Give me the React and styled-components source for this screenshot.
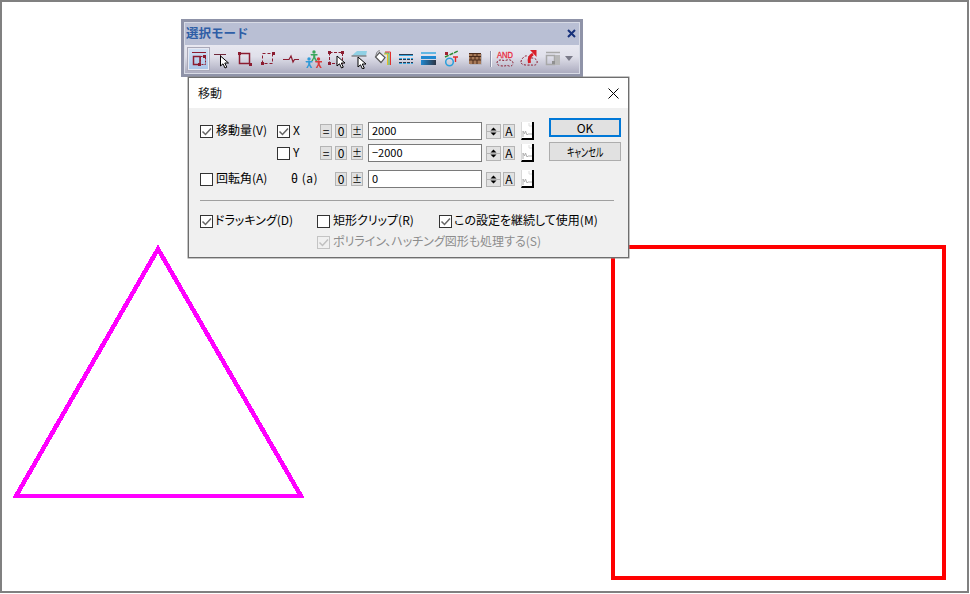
import React from 'react';
import styled, { createGlobalStyle } from 'styled-components';

const GlobalStyle = createGlobalStyle`
  html, body {
    margin: 0;
    padding: 0;
    background: #fff;
  }
  * {
    box-sizing: border-box;
  }
`;

const UI_FONT = '"Noto Sans CJK JP", "Liberation Sans", sans-serif';
const DARK_RED = '#8c1c30';

const Canvas = styled.div`
  position: relative;
  width: 969px;
  height: 593px;
  border: 2px solid #808080;
  background: #fff;
  overflow: hidden;
`;

const Drawing = styled.svg`
  position: absolute;
  left: -2px;
  top: -2px;
`;

const Toolbar = styled.div`
  position: absolute;
  left: 179px;
  top: 17px;
  width: 402px;
  height: 58px;
  border: 3px solid #8f93a8;
  outline: 1px solid #d8dbe6;
  outline-offset: -4px;
  background: #b9bfd4;
  display: flex;
  flex-direction: column;
`;

const ToolbarTitle = styled.div`
  height: 23px;
  flex: none;
  display: flex;
  align-items: center;
  justify-content: space-between;
  padding: 0 4px 0 2px;
  color: #2f5ea6;
  font: 700 12.5px/1 ${UI_FONT};
`;

const ToolbarRow = styled.div`
  flex: 1;
  display: flex;
  align-items: center;
  padding: 0 0 2px 3px;
  background: linear-gradient(#e8e8f0 0%, #e0e0ea 40%, #a9a9bd 100%);
`;

const ToolButton = styled.div`
  width: ${({ $wide }) => ($wide ? 24 : 23)}px;
  height: 24px;
  flex: none;
  display: flex;
  align-items: center;
  justify-content: center;
  ${({ $active }) => $active && `
    background: linear-gradient(#d4e2f4, #a8c4e8);
    border: 1px solid #a9a9b9;
    box-shadow: inset 0 0 0 1px #e6e8f2;
  `}
`;

const ToolSep = styled.div`
  width: 2px;
  height: 16px;
  flex: none;
  margin: 0 1px 0 4px;
  background: #f4f4f8;
  border-left: 1px solid #8f93a8;
`;

const Dialog = styled.div`
  position: absolute;
  left: 186px;
  top: 75px;
  width: 441px;
  height: 181px;
  border: 1px solid #6e6e6e;
  box-shadow: 0 0 0 0.5px #8a8a8a;
  background: #f0f0f0;
  font: 400 12px/1 ${UI_FONT};
  font-feature-settings: "palt";
  color: #000;
`;

const DialogTitle = styled.div`
  height: 30px;
  background: #fff;
  display: flex;
  align-items: center;
  justify-content: space-between;
  padding: 0 9px 0 9px;
  color: #1a1a1a;
`;

const DialogBody = styled.div`
  padding: 14px 0 0 11px;
`;

const TopSection = styled.div`
  display: flex;
  align-items: flex-start;
`;

const FieldGrid = styled.div`
  display: grid;
  grid-template-columns: 77px 43px 15px 16px 17px 118px 17px 18px 13px;
  grid-template-rows: 18px 18px 18px;
  row-gap: 4px;
  align-items: center;
  width: 349px;
  & > :nth-child(n + 19) {
    position: relative;
    top: 4px;
  }
`;

const RightButtons = styled.div`
  margin-top: -4px;
  display: flex;
  flex-direction: column;
  gap: 5px;
  width: 72px;
`;

const DialogButton = styled.div`
  height: ${({ $h }) => $h}px;
  display: flex;
  align-items: center;
  justify-content: center;
  background: #e1e1e1;
  border: ${({ $primary }) => ($primary ? '2px solid #0078d7' : '1px solid #adadad')};
`;

const NarrowLabel = styled.span`
  display: inline-block;
  white-space: nowrap;
  transform: scaleX(0.67);
`;

const CheckLabel = styled.div`
  display: flex;
  align-items: center;
  gap: ${({ $gap }) => $gap ?? 3}px;
  white-space: nowrap;
  color: ${({ $disabled }) => ($disabled ? '#8c8c8c' : '#000')};
`;

const LabelText = styled.span`
  padding-bottom: 2px;
`;

const Box = styled.span`
  width: 13px;
  height: 13px;
  flex: none;
  border: 1px solid ${({ $disabled }) => ($disabled ? '#c4c4c4' : '#333')};
  background: ${({ $disabled }) => ($disabled ? '#f0f0f0' : '#fff')};
  display: flex;
`;

const Placeholder = styled.span``;

const Theta = styled.span`
  grid-column: 2 / span 2;
  padding: 0 0 2px 14px;
  white-space: nowrap;
  letter-spacing: 0.5px;
`;

const SmallButton = styled.div`
  width: 12px;
  height: 14px;
  display: flex;
  align-items: center;
  justify-content: center;
  background: #e1e1e1;
  border: 1px solid #b4b4b4;
  font-size: ${({ $small }) => ($small ? 10 : 12)}px;
`;

const ValueInput = styled.div`
  width: 114px;
  height: 18px;
  display: flex;
  align-items: center;
  padding: 0 0 1px 3px;
  background: #fff;
  border: 1px solid #7a7a7a;
  font-size: 11px;
`;

const Spinner = styled.div`
  width: 15px;
  height: 15px;
  background: #e1e1e1;
  border: 1px solid #b4b4b4;
  display: flex;
`;

const PickerIcon = styled.div`
  width: 13px;
  height: 18px;
  background: #fff;
  border-left: 1px solid #d8d8d8;
  border-right: 2px solid #000;
  border-bottom: 2px solid #000;
  display: flex;
  align-items: flex-end;
`;

const Separator = styled.div`
  width: 414px;
  height: 1px;
  margin-top: 16px;
  background: #a0a0a0;
`;

const OptionRow = styled.div`
  display: flex;
  align-items: center;
  height: 14px;
  margin-top: ${({ $top }) => $top}px;
`;

const OptionCell = styled.div`
  width: ${({ $w }) => ($w ? `${$w}px` : 'auto')};
  flex: none;
`;

const Check = ({ color = '#666' }) => (
  <svg width="11" height="11" viewBox="0 0 11 11">
    <path d="M1.5 5.5 4.5 8.5 10 2.5" fill="none" stroke={color} strokeWidth="1.5" />
  </svg>
);

const CheckItem = ({ checked, disabled, gap, children }) => (
  <CheckLabel $disabled={disabled} $gap={gap}>
    <Box $disabled={disabled}>{checked && <Check color={disabled ? '#c0c0c0' : '#666'} />}</Box>
    <LabelText>{children}</LabelText>
  </CheckLabel>
);

const SpinnerGlyph = () => (
  <svg width="13" height="13" viewBox="0 0 13 13">
    <path d="M6.5 2.5 9.5 5.5H3.5z M3.5 7.5h6L6.5 10.5z" fill="#000" />
    <path d="M0 6.5h13" stroke="#b4b4b4" />
  </svg>
);

const PickerGlyph = () => (
  <svg width="10" height="16" viewBox="0 0 10 16">
    <path d="M1 15V9l1.5 3 1-3 1.5 4 1-1h4" fill="none" stroke="#b0b0b0" />
    <path d="M7 1v3h3" fill="none" stroke="#dcdcdc" />
  </svg>
);

const Cursor = ({ x, y }) => (
  <path
    transform={`translate(${x} ${y})`}
    d="M0 0v10l2.5-2.2L4.5 12l1.8-.8-2-4.2H8z"
    fill="#fff"
    stroke="#000"
    strokeWidth="1"
  />
);

const Corner = ({ x, y, color = DARK_RED }) => <rect x={x} y={y} width="3" height="3" fill={color} />;

const Person = ({ x, y, color }) => (
  <g fill={color}>
    <circle cx={x} cy={y} r="1.7" />
    <path d={`M${x - 3.5} ${y + 2}h7v1.5h-2.2v2l2 3.5h-1.7L${x} ${y + 6.5}l-1.1 2.5h-1.7l2-3.5v-2h-2.2z`} />
  </g>
);

const TOOL_ICONS = [
  <>
    <path d="M3 3.5h14" stroke={DARK_RED} />
    <rect x="4.5" y="7.5" width="6.5" height="8" fill="none" stroke={DARK_RED} strokeWidth="1.5" />
    <rect x="11.5" y="7.5" width="5" height="8" fill="none" stroke={DARK_RED} strokeDasharray="2 1" />
    <Corner x="9" y="14" />
    <Corner x="14" y="6" />
  </>,
  <>
    <path d="M2 5.5h12M8.5 5.5v6" stroke="#70283a" fill="none" />
    <Cursor x={8.5} y={7} />
  </>,
  <>
    <rect x="4.5" y="4.5" width="10" height="10" fill="none" stroke={DARK_RED} strokeWidth="1.5" />
    <Corner x="3" y="3" />
    <Corner x="14" y="14" />
  </>,
  <>
    <rect x="4.5" y="4.5" width="10" height="10" fill="none" stroke={DARK_RED} strokeDasharray="3 2" />
    <Corner x="14" y="3" />
    <Corner x="3" y="13" />
  </>,
  <path d="M2 10.5h6l2-3.5 2 6 1.5-2.5H18" fill="none" stroke={DARK_RED} strokeWidth="1.2" />,
  <>
    <Person x={10} y={3} color="#3aa65c" />
    <Person x={5} y={10} color="#2f9ad8" />
    <Person x={14.5} y={10} color="#d83a3a" />
  </>,
  <>
    <rect x="2.5" y="3.5" width="13" height="11" fill="none" stroke={DARK_RED} strokeDasharray="3 1.5" />
    <Corner x="1" y="2" />
    <Corner x="14" y="2" />
    <Corner x="1" y="13" />
    <Cursor x={10} y={7} />
  </>,
  <>
    <path d="M2 6.5 7 2h10l-1 4.5z" fill="#8fd0e4" />
    <path d="M1.5 7h15" stroke="#555" />
    <Cursor x={8} y={8} />
  </>,
  <>
    <path d="M2.5 8 6.5 3.5 12 8.5 8 13.5z" fill="#fff" stroke="#555" strokeWidth="1.2" />
    <path d="M3 7c0-3 2-6 4-5" fill="none" stroke="#777" />
    <path d="M11 5h3.5v11" fill="none" stroke="#e8c020" />
    <path d="M11.5 4h4.5v12" fill="none" stroke="#40b040" />
    <path d="M12 3h5.5v13" fill="none" stroke="#e03030" />
  </>,
  <>
    <path d="M3 5.5h14" stroke="#2a3a50" />
    <path d="M3 6.5h14" stroke="#38a8e0" />
    <path d="M3 9.5h14" stroke="#38a8e0" strokeDasharray="3 1" />
    <path d="M3 10.5h14" stroke="#2a3a50" strokeDasharray="3 1" />
    <path d="M3 13.5h14" stroke="#2a3a50" strokeDasharray="3 1" />
    <path d="M3 14.5h14" stroke="#38a8e0" strokeDasharray="3 1" />
  </>,
  <>
    <path d="M2 4h15" stroke="#38a8e0" strokeWidth="1.5" />
    <rect x="2" y="7" width="15" height="3" fill="#2088d0" />
    <rect x="2" y="11" width="15" height="5" fill="url(#thickFade)" />
  </>,
  <>
    <path d="M3 8 16 2" stroke="#2a8a30" strokeWidth="1.5" strokeDasharray="4 1" />
    <Corner x="3" y="3" color="#a02030" />
    <circle cx="7.5" cy="13" r="3.8" fill="none" stroke="#2aa0dc" strokeWidth="1.5" />
    <path d="M11 8h5M13.5 8v5" stroke="#e02828" strokeWidth="1.4" />
  </>,
  <>
    <rect x="4" y="4" width="12" height="11" fill="#a87a58" />
    <path d="M4 4.5h12M4 7.5h12M4 11h12M8 4v3.5M12 4v3.5M6 7.5V11M10 7.5V11M14 7.5V11M8 11v4M12 11v4" stroke="#4a2a1a" />
    <path d="M16.5 5v10.5H5" fill="none" stroke="#b4b4c0" />
  </>,
];

const AndIcon = () => (
  <svg width="20" height="20" viewBox="0 0 20 20">
    <text
      x="2"
      y="9"
      textLength="16"
      lengthAdjust="spacingAndGlyphs"
      fontFamily='"Liberation Sans", sans-serif'
      fontWeight="400"
      fontSize="9"
      fill="#e8283c"
      stroke="#e8283c"
      strokeWidth="0.3"
    >
      AND
    </text>
    <path d="M2 14c0-3 3-3 4-3s3 1 6 0 6 1 6 3-2 4-4 3-3 0-5 0-7 0-7-3z" fill="none" stroke={DARK_RED} strokeDasharray="2 1.5" />
  </svg>
);

const ArrowCloudIcon = () => (
  <svg width="20" height="20" viewBox="0 0 20 20">
    <path d="M2 13c0-3 4-7 6-6s2 2 5 2 6 2 5 5-4 2-6 2-10 1-10-3z" fill="none" stroke={DARK_RED} strokeDasharray="2 1.5" />
    <path d="M10.5 14c-1-4 0-7 3.5-9" fill="none" stroke="#d81e28" strokeWidth="3" />
    <path d="M11 1h6.5v7z" fill="#d81e28" />
  </svg>
);

const DisabledIcon = () => (
  <svg width="20" height="20" viewBox="0 0 20 20">
    <path d="M3 3.5h14" stroke="#a8a8a8" strokeWidth="1.5" />
    <rect x="3.5" y="6.5" width="8" height="9" fill="none" stroke="#a8a8a8" strokeWidth="1.5" />
    <rect x="12" y="6" width="5" height="10" fill="#b8b8b8" />
    <Corner x="9" y="12" color="#909090" />
  </svg>
);

const ROWS = [
  { label: <CheckItem checked>移動量(V)</CheckItem>, axis: <CheckItem checked gap={3}>X</CheckItem>, eq: true, value: '2000' },
  { label: <Placeholder />, axis: <CheckItem gap={3}>Y</CheckItem>, eq: true, value: '−2000' },
  { label: <CheckItem>回転角(A)</CheckItem>, theta: true, value: '0' },
];

const App = () => (
  <>
    <GlobalStyle />
    <Canvas>
      <Drawing width="970" height="594" shapeRendering="crispEdges">
        <path d="M158 249 16 496H301z" fill="none" stroke="#ff00ff" strokeWidth="4.5" />
        <rect x="613" y="247" width="331" height="331" fill="none" stroke="#ff0000" strokeWidth="4" />
      </Drawing>

      <Toolbar>
        <ToolbarTitle>
          <span>選択モード</span>
          <svg width="9" height="9" viewBox="0 0 9 9">
            <path d="M1 1l7 7M8 1 1 8" stroke="#16307a" strokeWidth="2" />
          </svg>
        </ToolbarTitle>
        <ToolbarRow>
          <svg width="0" height="0">
            <defs>
              <linearGradient id="thickFade" x1="0" x2="1" y1="0" y2="0">
                <stop offset="0" stopColor="#2088d0" />
                <stop offset="1" stopColor="#2c3444" />
              </linearGradient>
            </defs>
          </svg>
          {TOOL_ICONS.map((icon, i) => (
            <ToolButton key={i} $active={i === 0}>
              <svg width="20" height="20" viewBox="0 0 20 20">{icon}</svg>
            </ToolButton>
          ))}
          <ToolSep />
          <ToolButton $wide><AndIcon /></ToolButton>
          <ToolButton $wide><ArrowCloudIcon /></ToolButton>
          <ToolButton $wide><DisabledIcon /></ToolButton>
          <svg width="8" height="5" viewBox="0 0 8 5">
            <path d="M0 0h8L4 5z" fill="#7a7a88" />
          </svg>
        </ToolbarRow>
      </Toolbar>

      <Dialog>
        <DialogTitle>
          <span>移動</span>
          <svg width="11" height="11" viewBox="0 0 11 11">
            <path d="M.5.5l10 10M10.5.5l-10 10" stroke="#000" />
          </svg>
        </DialogTitle>
        <DialogBody>
          <TopSection>
            <FieldGrid>
              {ROWS.map((row, i) => (
                <React.Fragment key={i}>
                  {row.label}
                  {row.theta ? <Theta>θ (a)</Theta> : row.axis}
                  {row.eq && <SmallButton>=</SmallButton>}
                  <SmallButton>0</SmallButton>
                  <SmallButton $small>±</SmallButton>
                  <ValueInput>{row.value}</ValueInput>
                  <Spinner><SpinnerGlyph /></Spinner>
                  <SmallButton>A</SmallButton>
                  <PickerIcon><PickerGlyph /></PickerIcon>
                </React.Fragment>
              ))}
            </FieldGrid>
            <RightButtons>
              <DialogButton $primary $h={19}>OK</DialogButton>
              <DialogButton $h={19}><NarrowLabel>キャンセル</NarrowLabel></DialogButton>
            </RightButtons>
          </TopSection>
          <Separator />
          <OptionRow $top={13}>
            <OptionCell $w={117}><CheckItem checked gap={2}>ドラッキング(D)</CheckItem></OptionCell>
            <OptionCell $w={122}><CheckItem>矩形クリップ(R)</CheckItem></OptionCell>
            <OptionCell><CheckItem checked gap={2}>この設定を継続して使用(M)</CheckItem></OptionCell>
          </OptionRow>
          <OptionRow $top={7}>
            <OptionCell $w={117} />
            <OptionCell><CheckItem checked disabled>ポリライン、ハッチング図形も処理する(S)</CheckItem></OptionCell>
          </OptionRow>
        </DialogBody>
      </Dialog>
    </Canvas>
  </>
);

export default App;
